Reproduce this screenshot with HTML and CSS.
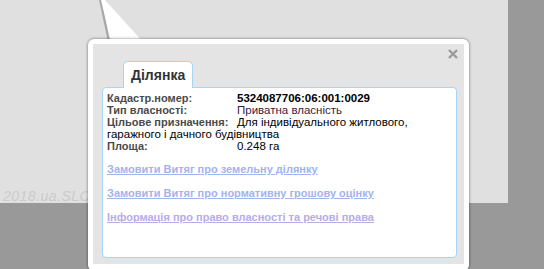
FILE: index.html
```html
<!DOCTYPE html>
<html lang="uk">
<head>
    <meta charset="UTF-8">
    <title>Ділянка</title>
    <link rel="stylesheet" href="styles.css">
</head>
<body>
    <div class="map">
        <div class="watermark">2018.ua.SLCC</div>
    </div>

    <!-- pointer of the popup -->
    <svg class="pointer" width="150" height="42" viewBox="0 0 150 42">
        <polygon points="99,0 102,0 110,42 108,42" fill="#a9a9a9"/>
        <polygon points="101,0 105,0 143,42 111,42" fill="#ffffff"/>
    </svg>

    <div class="popup">
        <div class="popup-inner">
            <span class="close-btn">
                <svg width="10" height="10" viewBox="0 0 10 10">
                    <path d="M1 1 L9 9 M9 1 L1 9" stroke="#9a9a9a" stroke-width="2.4"/>
                </svg>
            </span>
            <div class="tabs">
                <div class="tab">Ділянка</div>
            </div>
            <div class="tab-body">
                <div class="row"><span class="label">Кадастр.номер:</span><b>5324087706:06:001:0029</b></div>
                <div class="row"><span class="label">Тип власності:</span><span class="owner">Приватна власність</span></div>
                <div class="row"><span class="label">Цільове призначення:</span>Для індивідуального житлового, гаражного і дачного будівництва</div>
                <div class="row"><span class="label">Площа:</span>0.248 га</div>

                <a class="link" href="#">Замовити Витяг про земельну ділянку</a>
                <a class="link" href="#">Замовити Витяг про нормативну грошову оцінку</a>
                <a class="link visited" href="#">Інформація про право власності та речові права</a>
            </div>
        </div>
    </div>
</body>
</html>
```

FILE: styles.css
```css
* {
    margin: 0;
    padding: 0;
    box-sizing: border-box;
}

body {
    width: 544px;
    height: 269px;
    overflow: hidden;
    background: #999999;
    font-family: Arial, "Liberation Sans", sans-serif;
    position: relative;
}

.map {
    width: 508px;
    height: 203px;
    background: #e0e0e0;
    display: flex;
    flex-direction: column;
    justify-content: flex-end;
    padding-left: 3px;
}

.watermark {
    font-family: "Liberation Sans", sans-serif;
    font-style: italic;
    font-size: 14px;
    line-height: 13px;
    letter-spacing: 0.5px;
    color: #cbcbcb;
}

.pointer {
    position: absolute;
    top: 0;
    left: 0;
}

.popup {
    position: absolute;
    top: 39px;
    left: 88px;
    width: 381px;
    height: 232px;
    background: #ffffff;
    border-radius: 6px;
    padding: 5px;
    box-shadow: 0 0 3px rgba(0, 0, 0, 0.55);
}

.popup-inner {
    position: relative;
    height: 220px;
    background: #e4e4e4;
    padding: 17px 7px 0 9px;
}

.close-btn {
    position: absolute;
    top: 5px;
    right: 6px;
    line-height: 0;
}

.tabs {
    display: flex;
    padding-left: 21px;
}

.tab {
    height: 27px;
    margin-bottom: -1px;
    padding: 0 7px;
    background: #ffffff;
    border: 1px solid #a8d4f6;
    border-bottom: none;
    border-radius: 5px 5px 0 0;
    font-size: 14px;
    font-weight: bold;
    line-height: 27px;
    color: #333333;
    position: relative;
    z-index: 1;
}

.tab-body {
    height: 171px;
    background: #ffffff;
    border: 1px solid #a8d4f6;
    border-radius: 4px;
    padding: 4px 4px 0 4px;
}

.row {
    font-size: 11.5px;
    line-height: 12px;
    color: #000000;
}

.label {
    display: inline-block;
    width: 130px;
    font-size: 11px;
    font-weight: bold;
    color: #4a4a4a;
}

.owner {
    color: #3d1a3d;
}

.link {
    display: block;
    margin-top: 11px;
    font-size: 11px;
    line-height: 13px;
    font-weight: bold;
    color: #9db6ea;
    text-decoration: underline;
}

.link.visited {
    color: #b6ace6;
}
```
